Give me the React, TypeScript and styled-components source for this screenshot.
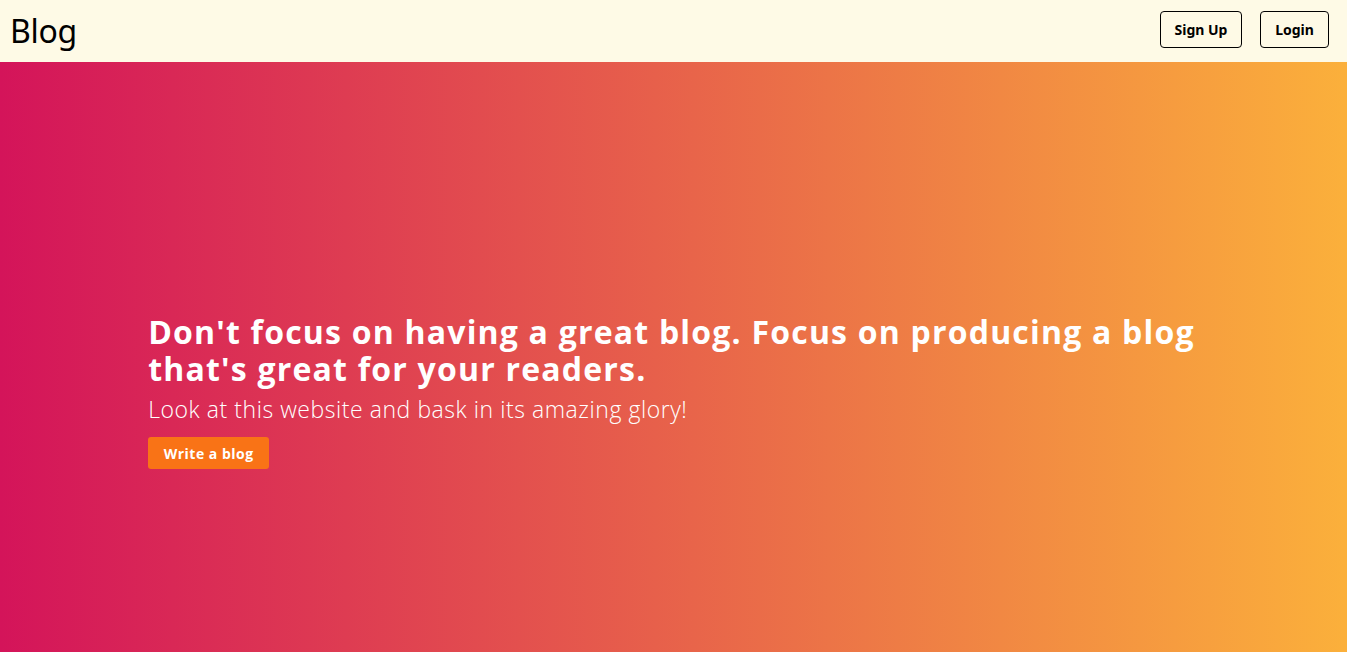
import React from "react";
import styled, { createGlobalStyle } from "styled-components";

const Global = createGlobalStyle`
  * { box-sizing: border-box; }
  html, body { margin: 0; padding: 0; }
  body { font-family: "Open Sans", "Noto Sans", sans-serif; background: #fffbe6; }
`;

const Header = styled.header`
  height: 62px;
  background: #fefae6;
  display: flex;
  align-items: center;
  justify-content: space-between;
  padding: 0 18px 0 10px;
`;

const Brand = styled.div`
  font-family: "Noto Sans", sans-serif;
  font-size: 32px;
  font-weight: 400;
  color: #000;
  letter-spacing: -0.3px;
  margin-top: -2px;
`;

const Nav = styled.nav`
  display: flex;
  gap: 18px;
  align-self: flex-start;
  padding-top: 11px;
`;

const NavButton = styled.button<{ $w: number }>`
  width: ${(p) => p.$w}px;
  height: 37px;
  background: transparent;
  border: 1px solid #000;
  border-radius: 4px;
  font-family: "Noto Sans", sans-serif;
  font-weight: 700;
  font-size: 14px;
  color: #000;
  cursor: pointer;
`;

const Hero = styled.section`
  height: 100vh;
  background: linear-gradient(to right, #d4145a 0%, #fbb03b 100%);
  display: flex;
  flex-direction: column;
  justify-content: center;
  padding: 6px 11% 0;
  color: #fff;
`;

const Title = styled.h1`
  margin: 0;
  font-family: "Open Sans", sans-serif;
  font-weight: 700;
  font-size: 32px;
  line-height: 37px;
  letter-spacing: 1.2px;
`;

const Subtitle = styled.p`
  margin: 7px 0 13px;
  font-family: "Open Sans", sans-serif;
  font-weight: 300;
  font-size: 23px;
  line-height: 30px;
  letter-spacing: 0.55px;
`;

const Cta = styled.button`
  align-self: flex-start;
  width: 121px;
  height: 32px;
  background: #f97316;
  border: none;
  border-radius: 3px;
  color: #fff;
  font-family: "Open Sans", sans-serif;
  font-weight: 700;
  font-size: 14px;
  letter-spacing: 0.5px;
  cursor: pointer;
`;

export default function App() {
  return (
    <>
      <Global />
      <Header>
        <Brand>Blog</Brand>
        <Nav>
          <NavButton $w={82}>Sign Up</NavButton>
          <NavButton $w={69}>Login</NavButton>
        </Nav>
      </Header>
      <Hero>
        <Title>
          Don't focus on having a great blog. Focus on producing a blog that's great for your readers.
        </Title>
        <Subtitle>Look at this website and bask in its amazing glory!</Subtitle>
        <Cta>Write a blog</Cta>
      </Hero>
    </>
  );
}
